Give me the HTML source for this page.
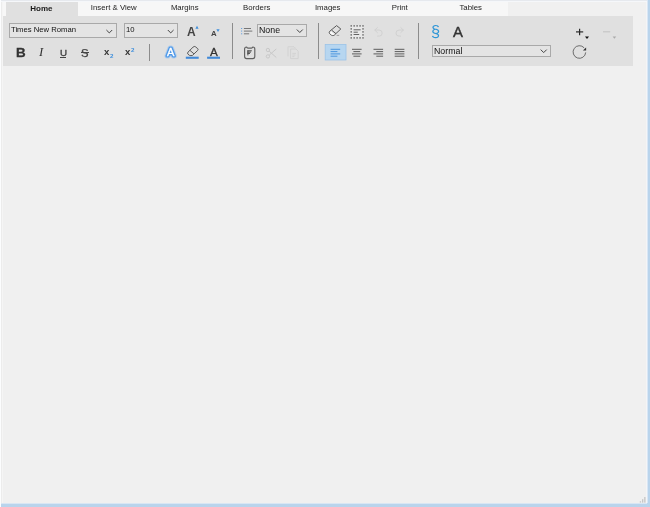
<!DOCTYPE html>
<html><head><meta charset="utf-8">
<style>
html,body{margin:0;padding:0;}
body{width:650px;height:507px;overflow:hidden;background:#f0f0f0;position:relative;font-family:"Liberation Sans",sans-serif;color:#222;}
.abs{position:absolute;}
#frame-l{left:0;top:0;width:1px;height:507px;background:#fcfdfe;}
#frame-l2{left:1px;top:2px;width:2px;height:501px;background:linear-gradient(90deg,#ececec 0,#ececec 1px,#f5f5f5 1px);}
#frame-r{left:648px;top:0;width:2px;height:507px;background:#b9d4ec;}
#frame-r3{left:647px;top:0;width:1px;height:507px;background:linear-gradient(#d9e6f4 0,#d9e6f4 503px,#b9d4ec 503px);}
#frame-r2{left:646px;top:0;width:1px;height:503px;background:#f4f5f7;}
#frame-b{left:0;top:504px;width:650px;height:3px;background:#b9d4ec;}
#frame-b3{left:0;top:503px;width:647px;height:1px;background:#d9e6f4;}
#frame-t{left:0;top:0;width:650px;height:1px;background:#e6e9ee;}
#frame-t2{left:0;top:1px;width:650px;height:1px;background:#f5f7fa;}
#tabbar{left:2.6px;top:2px;width:505px;height:14px;background:#f7f7f7;}
.tab{position:absolute;top:2px;height:14px;width:71.5px;text-align:center;font-size:7.8px;line-height:12.5px;color:#222;white-space:nowrap;}
.tab.sel{background:#e0e0e0;font-weight:bold;color:#1a1a1a;font-size:8px;line-height:13.4px;text-indent:-0.8px;}
#ribbon{left:2.7px;top:16px;width:630.5px;height:49.7px;background:#e0e0e0;}
.combo{position:absolute;border:1px solid #a9a9a9;background:#e4e4e4;white-space:nowrap;box-sizing:border-box;color:#111;}
.combo span{position:absolute;left:2px;top:0;}
.sep{position:absolute;width:1.2px;background:#8c8c8c;top:23px;height:36px;}
svg{position:absolute;left:0;top:0;overflow:visible;}
.t{position:absolute;white-space:nowrap;line-height:1;}
.t,.tab,.combo span{will-change:transform;}
</style></head><body>
<div class="abs" id="tabbar"></div>
<div class="tab sel" style="left:6px">Home</div>
<div class="tab" style="left:77.5px">Insert &amp; View</div>
<div class="tab" style="left:149px">Margins</div>
<div class="tab" style="left:220.5px">Borders</div>
<div class="tab" style="left:292px">Images</div>
<div class="tab" style="left:363.5px">Print</div>
<div class="tab" style="left:435px">Tables</div>
<div class="abs" id="ribbon"></div>
<div class="abs" id="frame-r2"></div>


<div class="combo" style="left:9px;top:23px;width:108px;height:14.5px;font-size:7.7px;line-height:13px"><span style="left:1px;top:-0.8px">Times New Roman</span></div>
<div class="combo" style="left:124px;top:23px;width:54px;height:14.5px;font-size:7.7px;line-height:13px"><span style="left:1.4px;top:-0.8px">10</span></div>
<div class="combo" style="left:256.5px;top:24px;width:50px;height:13px;font-size:8.8px;line-height:11px"><span style="left:1.4px">None</span></div>
<div class="combo" style="left:432.3px;top:45px;width:118.5px;height:12px;font-size:8.8px;line-height:10px"><span style="left:1.2px">Normal</span></div>

<div class="sep" style="left:149.3px;top:44px;height:17px"></div>
<div class="sep" style="left:231.5px"></div>
<div class="sep" style="left:317.6px"></div>
<div class="sep" style="left:417.8px"></div>

<!-- format buttons -->
<div class="t" style="left:15.7px;top:46.3px;font-size:13.4px;font-weight:bold;color:#333;-webkit-text-stroke:0.3px #333">B</div>
<div class="t" style="left:39.1px;top:46.1px;font-size:12.8px;font-style:italic;font-family:'Liberation Serif',serif;color:#333">I</div>
<div class="t" style="left:59.9px;top:48.2px;font-size:9.8px;color:#3a3a3a;-webkit-text-stroke:0.3px #3a3a3a">U</div><div class="abs" style="left:59.8px;top:57px;width:6.4px;height:0.9px;background:#444"></div>
<div class="t" style="left:81.3px;top:47.7px;font-size:11.3px;color:#444;-webkit-text-stroke:0.25px #444">S</div><div class="abs" style="left:80.5px;top:52.4px;width:8.6px;height:0.9px;background:#444"></div>
<div class="t" style="left:103.6px;top:46.7px;font-size:9.6px;font-weight:bold;color:#333">x</div>
<div class="t" style="left:109.5px;top:53.1px;font-size:6.2px;font-weight:bold;color:#3f8fdc">2</div>
<div class="t" style="left:125px;top:46.7px;font-size:9.6px;font-weight:bold;color:#333">x</div>
<div class="t" style="left:131px;top:46.6px;font-size:6.2px;font-weight:bold;color:#3f8fdc">2</div>

<!-- grow/shrink font -->
<div class="t" style="left:187.1px;top:25.5px;font-size:12px;font-weight:bold;color:#444">A</div>
<div class="t" style="left:211px;top:29.8px;font-size:7.8px;font-weight:bold;color:#444">A</div>

<!-- glow A, font color A -->

<div class="t" style="left:209.8px;top:46px;font-size:11.7px;color:#333;-webkit-text-stroke:0.3px #333">A</div>

<!-- paragraph / big A -->
<div class="t" style="left:431.2px;top:22.6px;font-size:16.4px;color:#2f96d6">§</div>
<div class="t" style="left:452.5px;top:24.5px;font-size:14.9px;color:#333;-webkit-text-stroke:0.4px #333">A</div>

<svg width="650" height="507" viewBox="0 0 650 507" fill="none">
 <!-- chevrons -->
 <g stroke="#444" stroke-width="1" fill="none">
  <path d="M106.4 30 l2.9 2.9 l2.9 -2.9"/>
  <path d="M167.8 30 l2.9 2.9 l2.9 -2.9"/>
  <path d="M296.8 29.5 l3 3 l3 -3"/>
  <path d="M540.7 49.6 l3 3 l3 -3"/>
 </g>
 <!-- tiny blue triangles -->
 <path d="M195.4 28.8 l1.6 -3 l1.6 3z" fill="#3f8fdc"/>
 <path d="M216.4 29.2 l3.2 0 l-1.6 2.8z" fill="#3f8fdc"/>
<!-- glow A -->
 <g font-family="Liberation Sans, sans-serif" font-size="11" text-anchor="middle">
  <text x="170.6" y="56" fill="#8fbef2" stroke="#8fbef2" stroke-width="5" stroke-linejoin="round" opacity="0.55">A</text>
  <text x="170.6" y="56" fill="#4f99e8" stroke="#4f99e8" stroke-width="3.2" stroke-linejoin="round">A</text>
  <text x="170.6" y="56" fill="#fff" stroke="#fff" stroke-width="0.35" stroke-linejoin="round">A</text>
 </g>
 <!-- highlighter -->
 <g stroke="#4a4a4a" stroke-width="0.9" stroke-linejoin="round" stroke-linecap="round">
  <path d="M193.4 46.8 q0.9 -0.8 1.9 -0.1 l2.4 1.9 q0.8 0.9 0 1.8 l-5.2 5 q-1.6 0.5 -3 0 l-1.6 -1.3 q-0.8 -0.9 0 -1.8 z"/>
  <path d="M190.2 50.6 l3.4 2.9"/>
 </g>
 <rect x="185.8" y="56.7" width="12.9" height="2.1" fill="#4189d8"/>
 <rect x="207.1" y="56.7" width="12.9" height="2.1" fill="#4189d8"/>
 <!-- list icon -->
 <g stroke="#5a5a5a" stroke-width="0.8">
  <path d="M243.9 28.5 H251"/><path d="M243.9 31.1 H252.3"/><path d="M243.9 33.8 H249.2"/>
 </g>
 <g stroke="#5b9be0" stroke-width="0.9">
  <path d="M241 28.5 h1.2"/><path d="M241 31.1 h1.2"/><path d="M241 33.8 h1.2"/>
 </g>
 <!-- paste -->
 <path d="M246.6 47 q-2 0 -2 2 v7.6 q0 2 2 2 h6.2 q2 0 2 -2 v-7.6 q0 -2 -2 -2 q-0.4 1.1 -1.4 1.1 h-3.4 q-1 0 -1.4 -1.1 z" stroke="#606060" stroke-width="1.15" stroke-linejoin="round"/>
 <g stroke="#484848" stroke-width="1">
  <path d="M247.4 50.8 h4.4"/><path d="M247.4 52.1 h3.6"/><path d="M247.4 53.4 h2.6"/><path d="M247.9 50.4 v5"/>
 </g>
 <!-- scissors disabled -->
 <g stroke="#c6c6c6" stroke-width="0.95">
  <path d="M276.3 48.9 L269.2 55.2"/><path d="M276.3 57.5 L269.2 51.2"/>
  <circle cx="267.9" cy="50" r="1.65"/><circle cx="267.9" cy="56.4" r="1.65"/>
 </g>
 <!-- copy disabled -->
 <g stroke="#d0d0d0" stroke-width="0.9" stroke-linejoin="round">
  <path d="M288 56.4 v-9.6 h6 l1.6 1.6"/>
  <path d="M290.6 49 h5.4 l2.2 2.2 v7.4 h-7.6 z"/>
  <path d="M292.4 53.4 h3.6 M292.4 55 h3 M292.4 56.6 h2"/>
 </g>
 <!-- eraser -->
 <g stroke="#4a4a4a" stroke-width="0.9" stroke-linejoin="round">
  <path d="M336.6 25.6 l4.2 3.4 l-6.6 6.2 q-1.6 0.8 -3 -0.2 l-1.6 -1.4 q-0.9 -1.3 0.2 -2.4 z"/>
  <path d="M331.7 30.2 l4.2 3.4"/>
  <path d="M336.6 35.4 h2.6" stroke="#999"/>
 </g>
 <path d="M331.2 31.6 l3.2 2.6 l-0.6 0.6 q-1.3 0.6 -2.4 -0.2 l-1.2 -1.1 q-0.5 -0.9 0.2 -1.6z" fill="#fafafa"/>
 <!-- select all -->
 <rect x="350.4" y="25.2" width="13.4" height="13.4" fill="#e8e8e8"/>
 <g fill="#484848"><rect x="350.55" y="25.25" width="1.3" height="1.3"/><rect x="350.55" y="28.25" width="1.3" height="1.3"/><rect x="350.55" y="31.25" width="1.3" height="1.3"/><rect x="350.55" y="34.25" width="1.3" height="1.3"/><rect x="350.55" y="37.25" width="1.3" height="1.3"/><rect x="353.50" y="25.25" width="1.3" height="1.3"/><rect x="353.50" y="37.25" width="1.3" height="1.3"/><rect x="356.45" y="25.25" width="1.3" height="1.3"/><rect x="356.45" y="37.25" width="1.3" height="1.3"/><rect x="359.40" y="25.25" width="1.3" height="1.3"/><rect x="359.40" y="37.25" width="1.3" height="1.3"/><rect x="362.35" y="25.25" width="1.3" height="1.3"/><rect x="362.35" y="28.25" width="1.3" height="1.3"/><rect x="362.35" y="31.25" width="1.3" height="1.3"/><rect x="362.35" y="34.25" width="1.3" height="1.3"/><rect x="362.35" y="37.25" width="1.3" height="1.3"/></g>
 <g stroke="#555" stroke-width="0.9">
  <path d="M353.6 29.8 H360.6"/><path d="M353.6 32.2 H357.8"/><path d="M353.6 34.5 H359.2"/>
 </g>
 <!-- undo / redo disabled -->
 <g stroke="#cfcfcf" stroke-width="0.9" stroke-linecap="round" stroke-linejoin="round">
  <path d="M377.4 27.6 l-2.6 2.5 l2.6 2.5"/>
  <path d="M375 30.1 h4.2 a3 3 0 0 1 0 6 h-1.6"/>
  <path d="M400.8 27.6 l2.6 2.5 l-2.6 2.5"/>
  <path d="M403.2 30.1 h-4.2 a3 3 0 0 0 0 6 h1.6"/>
 </g>
 <!-- align -->
 <rect x="325.2" y="44.4" width="20.8" height="15.6" fill="#b7d6f0" stroke="#9cc3e8" stroke-width="0.8"/>
 <g stroke="#3f8fdc" stroke-width="0.9">
  <path d="M330.6 49.3 H340.2"/><path d="M330.6 51.6 H337.4"/><path d="M330.6 53.9 H340.2"/><path d="M330.6 56.2 H337.4"/>
 </g>
 <g stroke="#4d4d4d" stroke-width="0.9">
  <path d="M352 49.3 H361.6"/><path d="M353.4 51.6 H360.2"/><path d="M352 53.9 H361.6"/><path d="M353.4 56.2 H360.2"/>
  <path d="M373.5 49.3 H383.1"/><path d="M376.3 51.6 H383.1"/><path d="M373.5 53.9 H383.1"/><path d="M376.3 56.2 H383.1"/>
  <path d="M394.7 49.3 H404.4"/><path d="M394.7 51.6 H404.4"/><path d="M394.7 53.9 H404.4"/><path d="M394.7 56.2 H404.4"/>
 </g>
 <!-- plus / minus -->
 <g stroke="#2a2a2a" stroke-width="1.2">
  <path d="M576 31.9 H583.2"/><path d="M579.6 28.7 V35.2"/>
 </g>
 <path d="M585 36.6 h4 l-2 2.4z" fill="#111"/>
 <path d="M603 31.8 H610.2" stroke="#c4c4c4" stroke-width="1.1"/>
 <path d="M612.6 36.6 h3.6 l-1.8 2.2z" fill="#aaa"/>
 <!-- refresh -->
 <path d="M585.7 52.4 A6.3 6.3 0 1 1 584.2 47.9" stroke="#666" stroke-width="0.95"/>
 <path d="M582.9 50.5 L586.1 47.4 V50.5 z" fill="#333"/>
 <!-- size grip -->
 <g fill="#c6c6c6">
  <rect x="639.8" y="501.2" width="1.3" height="1.4"/>
  <rect x="642" y="499.2" width="1.3" height="3.4"/>
  <rect x="644.2" y="497" width="1.3" height="5.6"/>
 </g>
</svg>

<div class="abs" id="frame-t"></div>
<div class="abs" id="frame-t2"></div>
<div class="abs" id="frame-l2"></div>
<div class="abs" id="frame-b"></div>
<div class="abs" id="frame-r"></div>
<div class="abs" id="frame-b3"></div>
<div class="abs" id="frame-r3"></div>
<div class="abs" id="frame-l"></div>
</body></html>
